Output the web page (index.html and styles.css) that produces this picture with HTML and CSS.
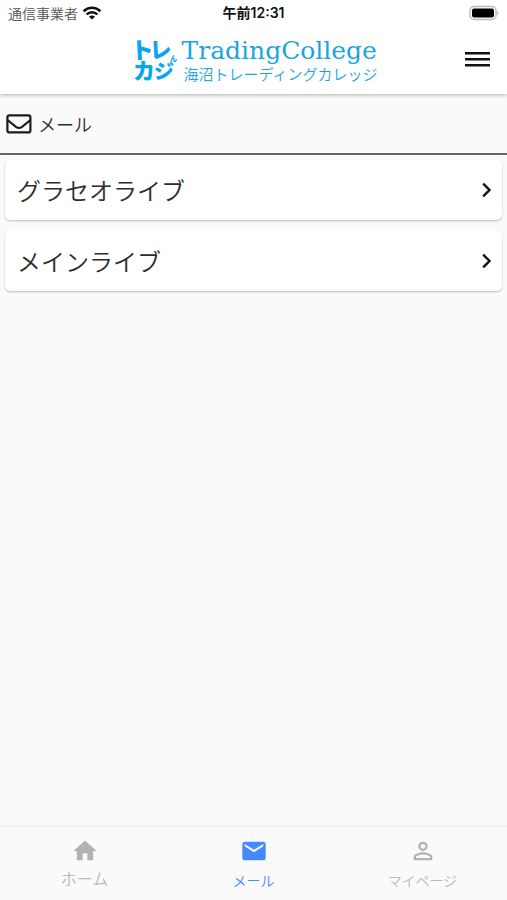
FILE: index.html
```html
<!DOCTYPE html>
<html lang="ja">
<head>
<meta charset="utf-8">
<meta name="viewport" content="width=device-width, initial-scale=1">
<title>メール</title>
<link rel="stylesheet" href="styles.css">
</head>
<body>
<header class="top">
  <div class="status">
    <div class="carrier">
      <span>通信事業者</span>
      <svg width="20" height="14" viewBox="0 0 20 14" fill="none" stroke="#111" stroke-width="2.6" aria-hidden="true">
        <path d="M1.6 5.2a12 12 0 0 1 16.8 0M4.6 8.4a7.7 7.7 0 0 1 10.8 0"/>
        <path d="M10 13.6 7 10.7a4.2 4.2 0 0 1 6 0z" fill="#111" stroke="none"/>
      </svg>
    </div>
    <span class="time">午前12:31</span>
    <svg class="battery" width="30" height="16" viewBox="0 0 30 16" aria-hidden="true">
      <rect x="1" y="1.5" width="26" height="13" rx="4" fill="#fff" stroke="#bbb" stroke-width="1.4"/>
      <rect x="3" y="3.5" width="22" height="9" rx="2" fill="#000"/>
      <path d="M28.3 6c1.6.5 1.6 3.5 0 4z" fill="#aaa"/>
    </svg>
  </div>
  <div class="bar">
    <a class="logo" href="#">
      <svg class="mark" width="48" height="60" viewBox="0 0 48 60" aria-hidden="true">
        <g transform="rotate(-3 24 30)">
          <text x="1" y="28" font-size="23">ト</text>
          <text x="20" y="28" font-size="22">レ</text>
        </g>
        <text x="3" y="49" font-size="22">カ</text>
        <text x="24" y="49" font-size="20">ジ</text>
        <text x="40" y="31" font-size="7">ん</text>
      </svg>
      <span class="words">
        <span class="name">TradingCollege</span>
        <span class="sub">海沼トレーディングカレッジ</span>
      </span>
    </a>
    <button class="menu" type="button" aria-label="メニュー">
      <svg width="26" height="18" viewBox="0 0 26 18" fill="#111" aria-hidden="true">
        <path d="M0 1h25v2.500H0zM0 7h25v2.500H0zM0 13h25v2.500H0z"/>
      </svg>
    </button>
  </div>
</header>
<main>
  <h1 class="title">
    <svg width="26" height="20" viewBox="0 0 26 20" fill="none" stroke="#1c1c1c" stroke-width="2.2" stroke-linejoin="round" aria-hidden="true">
      <rect x="1.4" y="1.4" width="23" height="17" rx="2"/>
      <path d="M1.500 6 10 12.800q3 2.200 6 0l8.500-6.800"/>
    </svg>
    <span>メール</span>
  </h1>
  <ul class="list">
    <li><a class="card" href="#"><span>グラセオライブ</span>
      <svg width="10" height="16" viewBox="0 0 10 16" fill="none" stroke="#111" stroke-width="2.4" aria-hidden="true"><path d="m1.200 1.700 6.300 6.300-6.300 6.300"/></svg></a></li>
    <li><a class="card" href="#"><span>メインライブ</span>
      <svg width="10" height="16" viewBox="0 0 10 16" fill="none" stroke="#111" stroke-width="2.4" aria-hidden="true"><path d="m1.200 1.700 6.300 6.300-6.300 6.300"/></svg></a></li>
  </ul>
</main>
<nav class="tabs">
  <a class="tab large" href="#">
    <svg width="28" height="28" viewBox="0 0 24 24" fill="#b2b2b2" aria-hidden="true"><path d="M10 20v-6h4v6h5v-8h3L12 3 2 12h3v8z"/></svg>
    <span>ホーム</span>
  </a>
  <a class="tab active" href="#" aria-current="page">
    <svg width="30" height="28" viewBox="0 0 24 24" fill="#448aff" aria-hidden="true"><path d="M20 4H4c-1.100 0-1.990.9-1.990 2L2 18c0 1.100.9 2 2 2h16c1.100 0 2-.9 2-2V6c0-1.100-.9-2-2-2zm0 4-8 5-8-5V6l8 5 8-5z"/></svg>
    <span>メール</span>
  </a>
  <a class="tab" href="#">
    <svg width="30" height="28" viewBox="0 0 24 24" fill="#b2b2b2" aria-hidden="true"><path d="M12 5.900c1.160 0 2.100.94 2.100 2.100s-.94 2.100-2.100 2.100S9.900 9.160 9.900 8s.94-2.100 2.100-2.100m0 9c2.970 0 6.100 1.460 6.100 2.100v1.100H5.900V17c0-.64 3.130-2.100 6.100-2.100M12 4C9.790 4 8 5.790 8 8s1.790 4 4 4 4-1.790 4-4-1.790-4-4-4zm0 9c-2.670 0-8 1.340-8 4v3h16v-3c0-2.660-5.330-4-8-4z"/></svg>
    <span>マイページ</span>
  </a>
</nav>
</body>
</html>
```
FILE: styles.css
```css
* {
  box-sizing: border-box;
}

body {
  margin: 0;
  min-height: 100vh;
  display: flex;
  flex-direction: column;
  background: #fafafa;
  color: #2c2c2c;
  font-family: "Noto Sans CJK JP", sans-serif;
  font-weight: 350;
}

a {
  color: inherit;
  text-decoration: none;
}

svg {
  display: block;
  flex: none;
}

.top {
  background: #fff;
  box-shadow: 0 1px 4px rgba(0, 0, 0, 0.3);
}

.status {
  display: grid;
  grid-template-columns: 1fr auto 1fr;
  align-items: center;
  height: 26px;
  padding: 0 8px;
  font-size: 14px;
  line-height: 20px;
}

.carrier {
  display: flex;
  align-items: center;
  gap: 4px;
  color: #555;
}

.time {
  color: #111;
  font-family: Inter, "Noto Sans CJK JP", sans-serif;
  font-weight: 600;
}

.battery {
  justify-self: end;
}

.bar {
  display: grid;
  grid-template-columns: 1fr auto 1fr;
  align-items: center;
  height: 68px;
  padding: 0 16px;
}

.logo {
  grid-column: 2;
  display: flex;
  align-items: center;
  gap: 4px;
  color: #1ba5df;
}

.mark {
  fill: #0ba5ec;
  font-weight: 900;
}

.words {
  display: flex;
  flex-direction: column;
}

.name {
  font-family: "DejaVu Serif", serif;
  font-size: 25px;
  line-height: 28px;
}

.sub {
  padding-left: 2px;
  font-size: 15px;
  line-height: 18px;
}

.menu {
  justify-self: end;
  padding: 0;
  border: 0;
  background: none;
}

main {
  flex: 1;
}

.title {
  display: flex;
  align-items: center;
  gap: 6px;
  height: 61px;
  margin: 0;
  padding: 0 6px;
  border-bottom: 2px solid #666;
  font-size: 18px;
  font-weight: 350;
}

.list {
  display: grid;
  gap: 11px;
  margin: 0;
  padding: 5px;
  list-style: none;
}

.card {
  display: flex;
  align-items: center;
  justify-content: space-between;
  height: 60px;
  padding: 0 10px 0 12px;
  border-radius: 5px;
  background: #fff;
  box-shadow: 0 1px 2px rgba(0, 0, 0, 0.25);
  font-size: 24px;
  line-height: 36px;
}

.tabs {
  display: grid;
  grid-template-columns: repeat(3, 1fr);
  height: 74px;
  border-top: 1px solid #ececec;
}

.tab {
  display: flex;
  flex-direction: column;
  align-items: center;
  gap: 3px;
  padding-top: 10px;
  color: #bbb;
  font-size: 14px;
  line-height: 24px;
}

.large {
  gap: 1px;
  font-size: 16px;
}

.active {
  color: #448aff;
}
```
